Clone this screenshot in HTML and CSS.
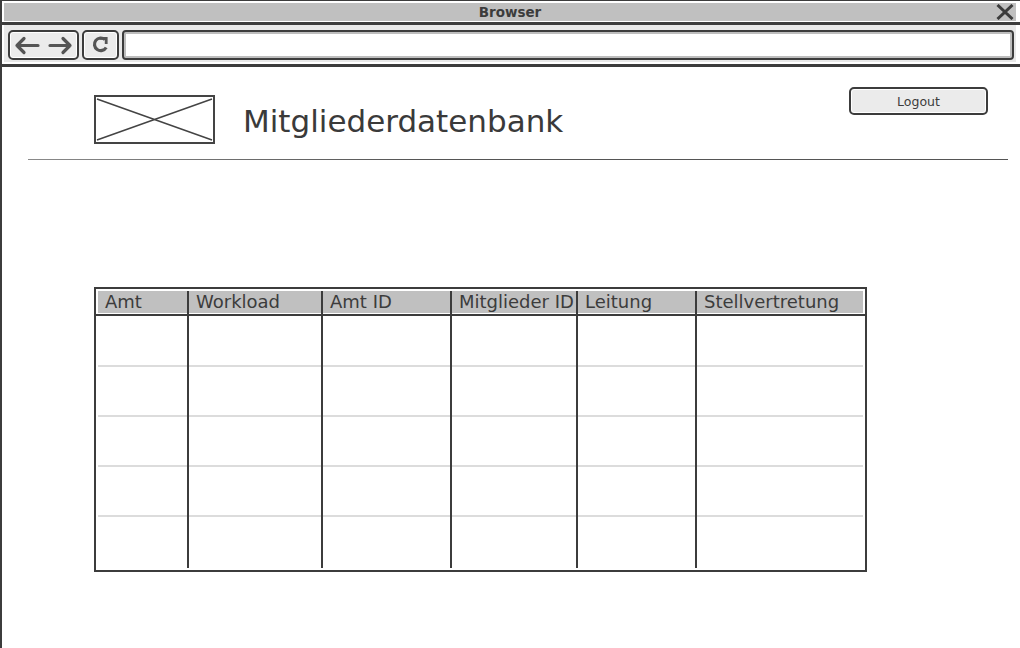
FILE: index.html
```html
<!DOCTYPE html>
<html lang="de">
<head>
<meta charset="utf-8">
<title>Mitgliederdatenbank</title>
<link rel="stylesheet" href="styles.css">
</head>
<body>
<div class="window">
  <div class="titlebar">
    <span class="title">Browser</span>
    <svg class="close" width="18" height="16" viewBox="0 0 18 16"><path d="M1.5 1 L16.5 15 M16.5 1 L1.5 15" stroke="#3c3c3c" stroke-width="3" fill="none"/></svg>
  </div>
  <div class="rule-dark"></div>
  <div class="toolbar-wrap">
    <div class="toolbar">
      <div class="btn nav">
        <svg width="67" height="26" viewBox="0 0 67 26"><path d="M7 13.5 H28 M14 6.5 L7 13.5 L14 20.5 M40 13.5 H60 M53 6.5 L60 13.5 L53 20.5" stroke="#555" stroke-width="3.2" fill="none" stroke-linecap="round" stroke-linejoin="round"/></svg>
      </div>
      <div class="btn reload">
        <svg width="33" height="26" viewBox="0 0 33 26"><path d="M21 7.6 A6.3 6.3 0 1 0 22.2 15.5" stroke="#555" stroke-width="3.2" fill="none"/><path d="M15.5 6.3 H22.2 V12" stroke="#555" stroke-width="2.8" fill="none" stroke-linejoin="miter"/></svg>
      </div>
      <div class="url"></div>
    </div>
  </div>
  <div class="rule-dark"></div>

  <main class="page">
    <header class="head">
      <div class="logo">
        <svg width="117" height="45" viewBox="0 0 117 45"><path d="M1 2 L116 43 M1 43 L116 2" stroke="#444" stroke-width="1.5" fill="none"/></svg>
      </div>
      <h1 class="apptitle">Mitgliederdatenbank</h1>
      <button class="logout">Logout</button>
    </header>
    <div class="hr"></div>

    <div class="tbl">
      <div class="col c1">
        <div class="th">Amt</div><div class="hline first"></div>
        <div class="td r1"></div><div class="td"></div><div class="td"></div><div class="td"></div><div class="td last"></div>
      </div>
      <div class="col c2 sep">
        <div class="th">Workload</div><div class="hline"></div>
        <div class="td r1"></div><div class="td"></div><div class="td"></div><div class="td"></div><div class="td last"></div>
      </div>
      <div class="col c3 sep">
        <div class="th">Amt ID</div><div class="hline"></div>
        <div class="td r1"></div><div class="td"></div><div class="td"></div><div class="td"></div><div class="td last"></div>
      </div>
      <div class="col c4 sep">
        <div class="th">Mitglieder ID</div><div class="hline"></div>
        <div class="td r1"></div><div class="td"></div><div class="td"></div><div class="td"></div><div class="td last"></div>
      </div>
      <div class="col c5 sep">
        <div class="th">Leitung</div><div class="hline"></div>
        <div class="td r1"></div><div class="td"></div><div class="td"></div><div class="td"></div><div class="td last"></div>
      </div>
      <div class="col c6 sep">
        <div class="th">Stellvertretung</div><div class="hline final"></div>
        <div class="td r1"></div><div class="td"></div><div class="td"></div><div class="td"></div><div class="td last"></div>
      </div>
    </div>
  </main>
</div>
</body>
</html>
```
FILE: styles.css
```css
* { box-sizing: border-box; }
html, body { margin: 0; padding: 0; background: #fff; }
body { font-family: "DejaVu Sans", "Liberation Sans", sans-serif; color: #3c3c3c; }

.window {
  min-height: 100vh;
  border-left: 2px solid #3c3c3c;
  border-top: 1px solid #3c3c3c;
}

.titlebar {
  height: 18px;
  margin: 2px 4px 1px 2px;
  background: #c0c0c0;
  display: flex;
  align-items: center;
  justify-content: center;
  position: relative;
}
.title {
  font-weight: bold;
  font-size: 13.5px;
  line-height: 18px;
  color: #3c3c3c;
}
.close { position: absolute; right: 2px; top: 1px; }

.rule-dark { height: 3px; background: #3c3c3c; }

.toolbar-wrap { padding: 0 4px 2px 2px; }
.toolbar {
  height: 37px;
  background: #e8e8e8;
  display: flex;
  gap: 3px;
  padding: 5px 2px 2px 4px;
}
.btn {
  height: 30px;
  border: 2px solid #3c3c3c;
  border-radius: 5px;
  background: #ebebeb;
  box-shadow: inset 0 0 0 1px #fff;
  display: flex;
}
.btn svg { display: block; }
.nav { width: 71px; }
.reload { width: 37px; }
.url {
  flex: 1;
  height: 30px;
  border: 2px solid #3c3c3c;
  border-radius: 4px;
  background: #fff;
  box-shadow: inset 0 0 0 2px #bdbdbd;
}

.page { padding: 20px 0 0 0; }

.head {
  display: flex;
  align-items: flex-start;
  padding: 0 32px 0 92px;
}
.logo {
  width: 121px;
  height: 49px;
  margin-top: 8px;
  border: 2px solid #444;
}
.logo svg { display: block; }
.apptitle {
  margin: 16px 0 0 28px;
  font-size: 31px;
  line-height: 36px;
  font-weight: normal;
  color: #3a3a3a;
}
.logout {
  margin-left: auto;
  width: 139px;
  height: 28px;
  border: 2px solid #3c3c3c;
  border-radius: 5px;
  background: #ebebeb;
  box-shadow: inset 0 0 0 1px #fff;
  font-family: "DejaVu Sans", sans-serif;
  font-size: 12.5px;
  color: #3c3c3c;
  padding: 0;
}

.hr {
  height: 1px;
  margin: 15px 12px 0 26px;
  background: linear-gradient(to right, #8a8a8a, #555 40%, #555);
}

.tbl {
  display: flex;
  width: 773px;
  margin: 127px 0 0 92px;
  border: 2px solid #3c3c3c;
  padding: 2px;
}
.col { display: flex; flex-direction: column; flex: none; }
.sep { border-left: 2px solid #3c3c3c; }
.c1 { width: 89px; }
.c2 { width: 134px; }
.c3 { width: 129px; }
.c4 { width: 126px; }
.c5 { width: 119px; }
.c6 { width: 168px; }

.th {
  height: 22px;
  background: #c0c0c0;
  font-size: 18px;
  line-height: 22px;
  padding-left: 7px;
  white-space: nowrap;
  overflow: hidden;
  color: #3c3c3c;
}
.hline {
  height: 2px;
  margin-top: 1px;
  background: #3c3c3c;
}
.hline.first { margin-left: -2px; }
.hline.final { margin-right: -2px; }

.td { height: 50px; border-bottom: 2px solid #dcdcdc; }
.td.r1 { height: 51px; }
.td.last { height: 51px; border-bottom: none; }
```
